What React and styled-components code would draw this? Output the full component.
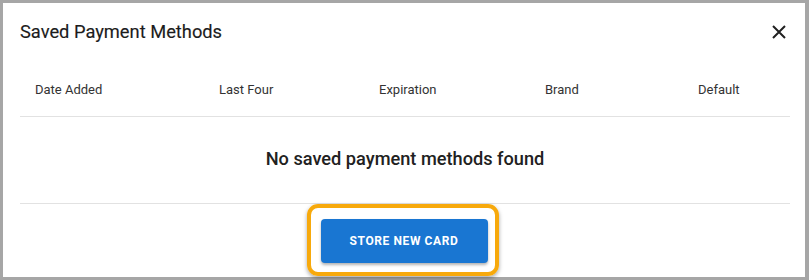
import React from "react";
import styled, { createGlobalStyle } from "styled-components";

const GlobalStyle = createGlobalStyle`
  html, body {
    margin: 0;
    padding: 0;
    background: #a6a6a6;
    font-family: Roboto, "Liberation Sans", Arial, sans-serif;
  }
  * { box-sizing: border-box; }
`;

const Frame = styled.div`
  width: 809px;
  height: 280px;
  padding: 3px 4px 3px 3px;
`;

const Modal = styled.div`
  background: #fff;
  height: 100%;
  display: flex;
  flex-direction: column;
`;

const TitleBar = styled.div`
  display: flex;
  align-items: center;
  justify-content: space-between;
  height: 58px;
  padding: 0 16px 0 17px;
`;

const Title = styled.h2`
  margin: 0;
  font-size: 18.3px;
  font-weight: 400;
  color: #1c1c1c;
  line-height: 24px;
  -webkit-text-stroke: 0.15px #1c1c1c;
`;

const CloseButton = styled.button`
  border: 0;
  background: none;
  padding: 0;
  width: 20px;
  height: 20px;
  display: flex;
  align-items: center;
  justify-content: center;
  cursor: pointer;
  color: #212121;
`;

const Table = styled.div`
  margin: 0 15px 0 17px;
`;

const HeaderRow = styled.div`
  display: grid;
  grid-template-columns: 184px 160px 166px 153px 1fr;
  height: 56px;
  align-items: center;
  padding-top: 2px;
  border-bottom: 1px solid #e2e2e2;
`;

const HeaderCell = styled.div`
  padding-left: 15px;
  font-size: 13px;
  color: #333;
`;

const EmptyRow = styled.div`
  height: 87px;
  display: flex;
  align-items: center;
  justify-content: center;
  padding-bottom: 4px;
  border-bottom: 1px solid #e2e2e2;
  font-size: 18.2px;
  font-weight: 500;
  color: #212121;
`;

const Footer = styled.div`
  flex: 1;
  display: flex;
  align-items: center;
  justify-content: center;
  padding-top: 1px;
`;

const StoreButton = styled.button`
  position: relative;
  width: 167px;
  height: 44px;
  border: 0;
  border-radius: 4px;
  background: #1976d2;
  color: #fff;
  font-family: Roboto, "Liberation Sans", Arial, sans-serif;
  font-size: 12px;
  font-weight: 700;
  letter-spacing: 0.6px;
  text-transform: uppercase;
  box-shadow: 0 2px 3px rgba(0, 0, 0, 0.3);
  cursor: pointer;

  &::after {
    content: "";
    position: absolute;
    top: -15px;
    left: -14px;
    right: -11px;
    bottom: -13px;
    border: 4px solid #f7a90c;
    border-radius: 11px;
    box-shadow: 0 2px 4px rgba(0, 0, 0, 0.35);
    pointer-events: none;
  }
`;

const columns = ["Date Added", "Last Four", "Expiration", "Brand", "Default"];

export default function App() {
  return (
    <>
      <GlobalStyle />
      <Frame>
        <Modal>
          <TitleBar>
            <Title>Saved Payment Methods</Title>
            <CloseButton aria-label="Close">
              <svg width="14" height="14" viewBox="0 0 14 14">
                <path d="M1 1L13 13M13 1L1 13" stroke="currentColor" strokeWidth="2" />
              </svg>
            </CloseButton>
          </TitleBar>
          <Table>
            <HeaderRow>
              {columns.map((c) => (
                <HeaderCell key={c}>{c}</HeaderCell>
              ))}
            </HeaderRow>
            <EmptyRow>No saved payment methods found</EmptyRow>
          </Table>
          <Footer>
            <StoreButton>Store New Card</StoreButton>
          </Footer>
        </Modal>
      </Frame>
    </>
  );
}
